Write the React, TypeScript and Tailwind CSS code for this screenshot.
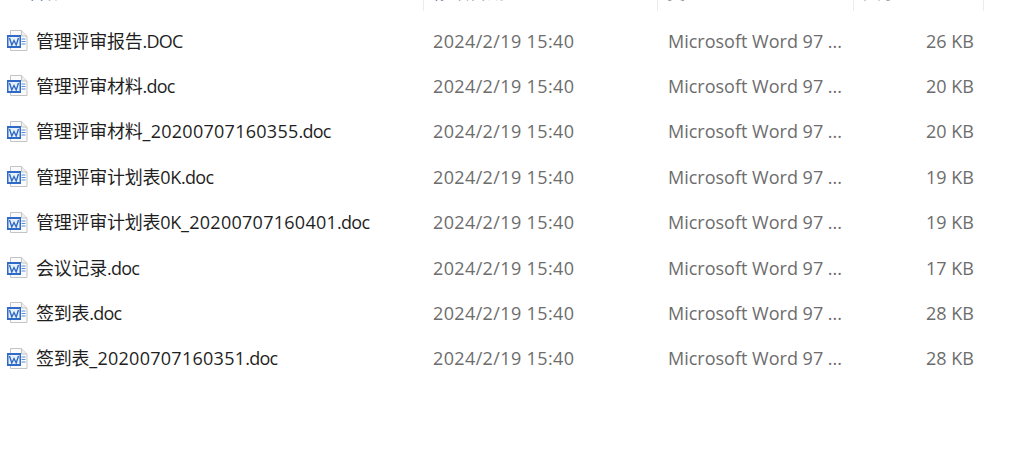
const files = [
  { cn: '管理评审报告', num: '', ext: '.DOC', size: '26 KB' },
  { cn: '管理评审材料', num: '', ext: '.doc', size: '20 KB' },
  { cn: '管理评审材料', num: '_20200707160355', ext: '.doc', size: '20 KB' },
  { cn: '管理评审计划表0K', num: '', ext: '.doc', size: '19 KB' },
  { cn: '管理评审计划表0K', num: '_20200707160401', ext: '.doc', size: '19 KB' },
  { cn: '会议记录', num: '', ext: '.doc', size: '17 KB' },
  { cn: '签到表', num: '', ext: '.doc', size: '28 KB' },
  { cn: '签到表', num: '_20200707160351', ext: '.doc', size: '28 KB' },
]

function DocIcon() {
  return (
    <svg width="22" height="22" viewBox="0 0 22 22" className="shrink-0">
      <path d="M3.5 0.5H14.5L20 6V20.5H3.5Z" fill="#fbfbfb" stroke="#c4c4c4" />
      <path d="M14.5 0.5V6H20" fill="#eeeeee" stroke="#c4c4c4" />
      <rect x="0" y="5" width="14" height="13" fill="#2f6ac6" />
      <rect x="1.5" y="7" width="11" height="9" fill="#e8f0fb" />
      <path d="M2.5 8L4.8 15L7 10.5L9.2 15L11.5 8" fill="none" stroke="#2f6ac6" strokeWidth="1.4" />
      <path d="M14.5 9H18.5M14.5 11.5H18.5M14.5 14H18.5" stroke="#5b8fd8" strokeWidth="1.2" />
    </svg>
  )
}

export default function App() {
  return (
    <div className="h-[456px] w-[1024px] overflow-hidden bg-white font-['Open_Sans','Noto_Sans_CJK_SC',sans-serif] text-[18px]">
      <div className="flex h-[11px] overflow-hidden text-[#4c607a]">
        <div className="w-[424px] border-r border-[#ececec] pl-[27px]">
          <div className="-mt-[21px]">名称</div>
        </div>
        <div className="w-[234px] border-r border-[#ececec] pl-[9px]">
          <div className="-mt-[21px]">修改日期</div>
        </div>
        <div className="w-[196px] border-r border-[#ececec] pl-[9px]">
          <div className="-mt-[21px]">类型</div>
        </div>
        <div className="w-[130px] border-r border-[#ececec] pl-[9px]">
          <div className="-mt-[21px]">大小</div>
        </div>
      </div>
      <div className="pt-[7.4px]">
        {files.map((file) => (
          <div key={file.cn + file.num} className="flex h-[45.4px] items-center">
            <div className="flex w-[424px] items-center gap-[7px] pl-[7px] text-[#1f1f1f]">
              <DocIcon />
              <span className="whitespace-nowrap">
                <span className="tracking-[-0.25px]">{file.cn}</span>
                <span className="tracking-[0.27px]">{file.num}</span>
                <span className="tracking-[-0.75px]">{file.ext}</span>
              </span>
            </div>
            <div className="w-[235px] pl-[9px] tracking-[0.37px] whitespace-nowrap text-[#6d6d6d]">2024/2/19 15:40</div>
            <div className="w-[196px] pl-[9px] whitespace-nowrap text-[#6d6d6d]">Microsoft Word 97 ...</div>
            <div className="w-[119px] text-right text-[#6d6d6d]">{file.size}</div>
          </div>
        ))}
      </div>
    </div>
  )
}
